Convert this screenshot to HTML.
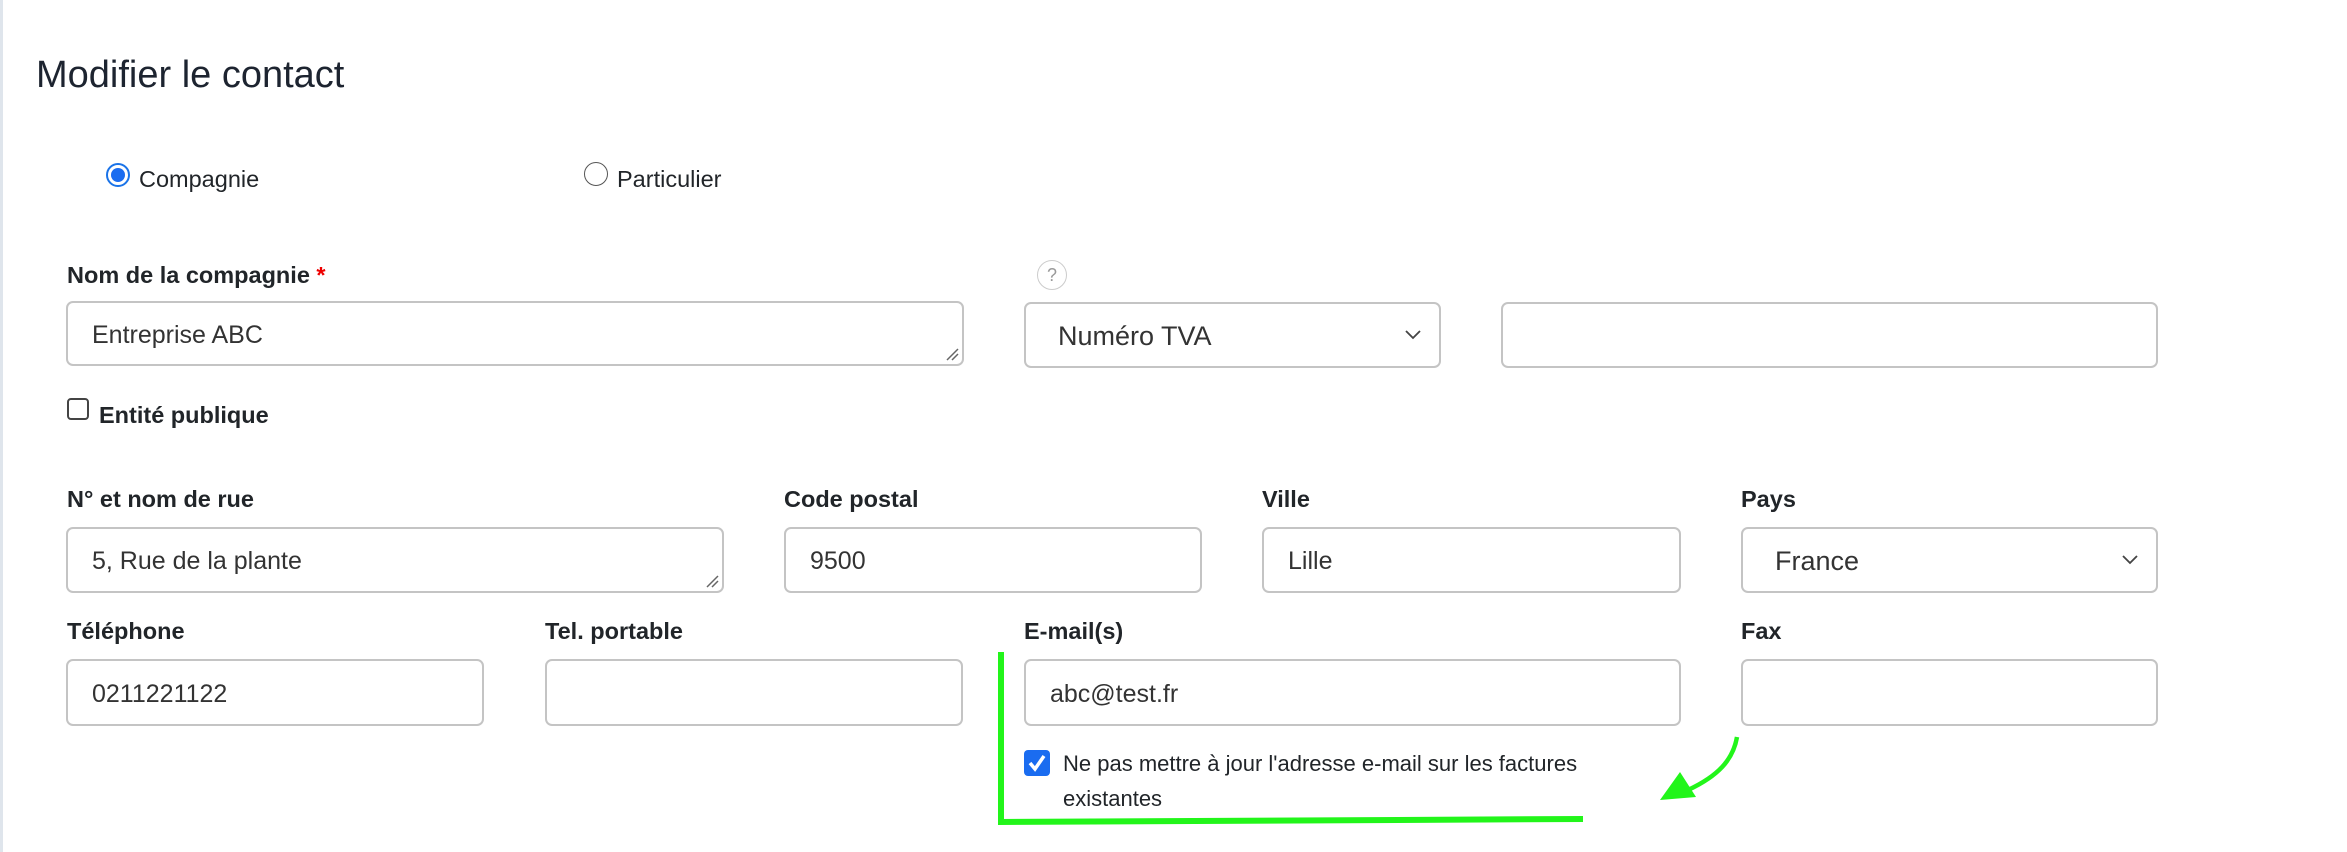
<!DOCTYPE html>
<html><head><meta charset="utf-8"><style>
html,body{margin:0;padding:0;width:2347px;height:852px;background:#fff;overflow:hidden;font-family:"Liberation Sans",Arial,sans-serif;color:#212529;}
.abs{position:absolute;}
.lbl{position:absolute;font-weight:bold;font-size:23.5px;color:#212529;line-height:1;}
.box{position:absolute;border:2px solid #c4c4c4;border-radius:7px;box-sizing:border-box;background:#fff;font-size:25px;color:#333;display:flex;align-items:center;padding-left:24px;padding-top:3px;}
.sel{font-size:27px;padding-left:32px;}
.chev{position:absolute;right:18px;top:26px;}
.grip{position:absolute;right:3px;bottom:3px;}
</style></head><body>
<div class="abs" style="left:0;top:0;width:3px;height:852px;background:#dfe5ec"></div>
<div class="abs" style="left:36px;top:56px;font-size:38px;line-height:1;color:#1d2430">Modifier le contact</div>

<div class="abs" style="left:106px;top:163px;width:20px;height:20px;border:2px solid #1a73e8;border-radius:50%;"></div>
<div class="abs" style="left:111px;top:168px;width:14px;height:14px;background:#1a6cf0;border-radius:50%;"></div>
<div class="abs" style="left:139px;top:168px;font-size:23.5px;line-height:1">Compagnie</div>
<div class="abs" style="left:584px;top:162px;width:22px;height:22px;border:1.5px solid #555;border-radius:50%;"></div>
<div class="abs" style="left:617px;top:168px;font-size:23.5px;line-height:1">Particulier</div>

<div class="lbl" style="left:67px;top:264px">Nom de la compagnie <span style="color:#e00">*</span></div>
<div class="box" style="left:66px;top:301px;width:898px;height:65px">Entreprise ABC<svg class="grip" width="14" height="14"><path d="M13 2L2 13M13 7L7 13" stroke="#666" stroke-width="1.5"/></svg></div>
<div class="abs" style="left:1037px;top:260px;width:28px;height:28px;border:1.5px solid #ccc;border-radius:50%;text-align:center;line-height:28px;font-size:18px;color:#999">?</div>
<div class="box sel" style="left:1024px;top:302px;width:417px;height:66px">Numéro TVA<svg class="chev" width="16" height="10"><path d="M1 1L8 8L15 1" fill="none" stroke="#444" stroke-width="1.8"/></svg></div>
<div class="box" style="left:1501px;top:302px;width:657px;height:66px"></div>

<div class="abs" style="left:67px;top:398px;width:22px;height:22px;border:2px solid #444;border-radius:4px;box-sizing:border-box"></div>
<div class="lbl" style="left:99px;top:404px">Entité publique</div>

<div class="lbl" style="left:67px;top:488px">N° et nom de rue</div>
<div class="lbl" style="left:784px;top:488px">Code postal</div>
<div class="lbl" style="left:1262px;top:488px">Ville</div>
<div class="lbl" style="left:1741px;top:488px">Pays</div>
<div class="box" style="left:66px;top:527px;width:658px;height:66px">5, Rue de la plante<svg class="grip" width="14" height="14"><path d="M13 2L2 13M13 7L7 13" stroke="#666" stroke-width="1.5"/></svg></div>
<div class="box" style="left:784px;top:527px;width:418px;height:66px">9500</div>
<div class="box" style="left:1262px;top:527px;width:419px;height:66px">Lille</div>
<div class="box sel" style="left:1741px;top:527px;width:417px;height:66px">France<svg class="chev" width="16" height="10"><path d="M1 1L8 8L15 1" fill="none" stroke="#444" stroke-width="1.8"/></svg></div>

<div class="lbl" style="left:67px;top:620px">Téléphone</div>
<div class="lbl" style="left:545px;top:620px">Tel. portable</div>
<div class="lbl" style="left:1024px;top:620px">E-mail(s)</div>
<div class="lbl" style="left:1741px;top:620px">Fax</div>
<div class="box" style="left:66px;top:659px;width:418px;height:67px">0211221122</div>
<div class="box" style="left:545px;top:659px;width:418px;height:67px"></div>
<div class="box" style="left:1024px;top:659px;width:657px;height:67px">abc@test.fr</div>
<div class="box" style="left:1741px;top:659px;width:417px;height:67px"></div>

<div class="abs" style="left:1024px;top:750px;width:26px;height:26px;background:#1a6cf0;border-radius:4px"></div>
<svg class="abs" style="left:1024px;top:750px" width="26" height="26"><path d="M6 13L11 19L20 6" fill="none" stroke="#fff" stroke-width="3.5"/></svg>
<div class="abs" style="left:1063px;top:746px;font-size:22px;line-height:35px;width:600px">Ne pas mettre à jour l'adresse e-mail sur les factures existantes</div>

<svg class="abs" style="left:0;top:0" width="2347" height="852">
<path d="M1001 652L1001 822L1583 819" fill="none" stroke="#22f51a" stroke-width="6"/>
<path d="M1737 737C1733 760 1718 776 1688 790" fill="none" stroke="#22f51a" stroke-width="4.5"/>
<path d="M1660 800L1680 772L1696 797Z" fill="#22f51a"/>
</svg>
</body></html>
